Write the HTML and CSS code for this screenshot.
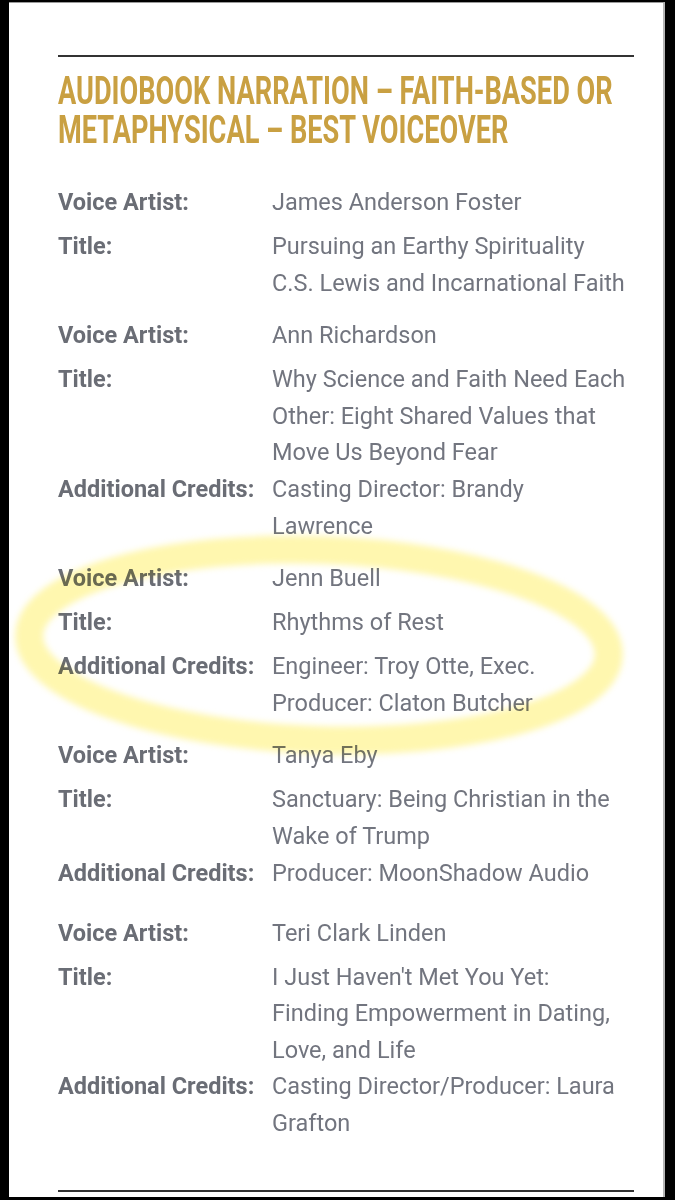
FILE: index.html
```html
<!DOCTYPE html>
<html>
<head>
    <meta charset="UTF-8">
    <title>Audiobook Narration - Faith-Based or Metaphysical</title>
    <link rel="stylesheet" href="styles.css">
</head>
<body>
<div class="panel">
    <hr class="strek">
    <h2 class="overskrift">AUDIOBOOK NARRATION – FAITH-BASED OR<br>METAPHYSICAL – BEST VOICEOVER</h2>

    <!-- en blokk per nominert -->
    <div class="blokk">
        <div class="rad"><span class="etikett">Voice Artist:</span><span class="verdi">James Anderson Foster</span></div>
        <div class="rad"><span class="etikett">Title:</span><span class="verdi">Pursuing an Earthy Spirituality<br>C.S. Lewis and Incarnational Faith</span></div>
    </div>

    <div class="blokk">
        <div class="rad"><span class="etikett">Voice Artist:</span><span class="verdi">Ann Richardson</span></div>
        <div class="rad"><span class="etikett">Title:</span><span class="verdi">Why Science and Faith Need Each Other: Eight Shared Values that Move Us Beyond Fear</span></div>
        <div class="rad"><span class="etikett">Additional Credits:</span><span class="verdi">Casting Director: Brandy<br>Lawrence</span></div>
    </div>

    <div class="blokk">
        <div class="rad"><span class="etikett">Voice Artist:</span><span class="verdi">Jenn Buell</span></div>
        <div class="rad"><span class="etikett">Title:</span><span class="verdi">Rhythms of Rest</span></div>
        <div class="rad"><span class="etikett">Additional Credits:</span><span class="verdi">Engineer: Troy Otte, Exec.<br>Producer: Claton Butcher</span></div>
    </div>

    <div class="blokk">
        <div class="rad"><span class="etikett">Voice Artist:</span><span class="verdi">Tanya Eby</span></div>
        <div class="rad"><span class="etikett">Title:</span><span class="verdi">Sanctuary: Being Christian in the Wake of Trump</span></div>
        <div class="rad"><span class="etikett">Additional Credits:</span><span class="verdi">Producer: MoonShadow Audio</span></div>
    </div>

    <div class="blokk">
        <div class="rad"><span class="etikett">Voice Artist:</span><span class="verdi">Teri Clark Linden</span></div>
        <div class="rad"><span class="etikett">Title:</span><span class="verdi">I Just Haven't Met You Yet: Finding Empowerment in Dating, Love, and Life</span></div>
        <div class="rad"><span class="etikett">Additional Credits:</span><span class="verdi">Casting Director/Producer: Laura Grafton</span></div>
    </div>

    <hr class="strek bunn">

    <!-- markeringstusj over Jenn Buell -->
    <svg class="tusj" width="655" height="260" viewBox="0 0 655 260">
        <ellipse cx="310" cy="127" rx="290" ry="95" transform="rotate(2 310 127)"
                 fill="none" stroke="#fff27a" stroke-width="28" stroke-opacity="0.6"/>
    </svg>
</div>
</body>
</html>
```

FILE: styles.css
```css
html, body{
    margin: 0;
    background: #000;
}
.panel{
    position: relative;
    overflow: hidden;
    margin-left: 9px;
    width: 656px;
    height: 1195px;
    margin-top: 2px;
    background: #fff;
    border-top: 1px solid #9a9a9a;
    border-right: 2px solid #b5b5b5;
    box-sizing: border-box;
    padding: 52px 29px 0 49px;
    font-family: Roboto, "Liberation Sans", sans-serif;
}
.strek{
    margin: 0;
    border: none;
    border-top: 2px solid #333;
}
.overskrift{
    width: 800px;
    margin: 15px 0 34px 0;
    font-family: Roboto, "Liberation Sans", sans-serif;
    font-weight: bold;
    font-size: 38px;
    line-height: 39px;
    white-space: nowrap;
    color: #c9a042;
    transform: scaleX(0.715);
    transform-origin: left top;
}
.blokk{
    margin-bottom: 16px;
}
.rad{
    display: flex;
    align-items: flex-start;
    min-height: 44px;
    font-size: 23.5px;
    line-height: 36.6px;
}
.etikett{
    flex: 0 0 214px;
    font-weight: bold;
    color: #6a6d75;
}
.verdi{
    flex: 1;
    padding-right: 6px;
    color: #72757f;
}
.bunn{
    margin-top: 48px;
}
.tusj{
    position: absolute;
    left: 0;
    top: 515px;
    mix-blend-mode: multiply;
    filter: blur(3px);
}
```
